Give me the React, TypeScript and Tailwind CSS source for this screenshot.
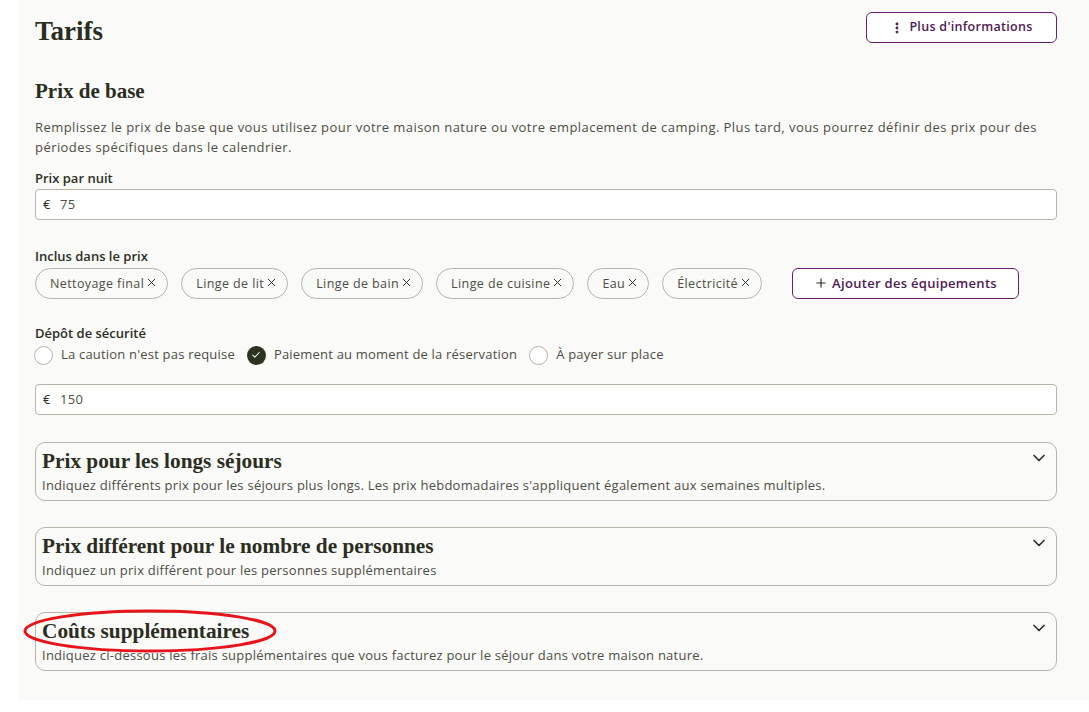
import React from "react";
import { ChevronDown, X, Plus, EllipsisVertical, Check } from "lucide-react";

const chips = [
  "Nettoyage final",
  "Linge de lit",
  "Linge de bain",
  "Linge de cuisine",
  "Eau",
  "Électricité",
];

const sections = [
  {
    title: "Prix pour les longs séjours",
    text: "Indiquez différents prix pour les séjours plus longs. Les prix hebdomadaires s'appliquent également aux semaines multiples.",
  },
  {
    title: "Prix différent pour le nombre de personnes",
    text: "Indiquez un prix différent pour les personnes supplémentaires",
  },
  {
    title: "Coûts supplémentaires",
    text: "Indiquez ci-dessous les frais supplémentaires que vous facturez pour le séjour dans votre maison nature.",
  },
];

const Radio = ({ label, checked }: { label: string; checked?: boolean }) => (
  <label className="flex items-center gap-2">
    {checked ? (
      <span className="w-[19px] h-[19px] rounded-full bg-[#2d3322] flex items-center justify-center">
        <Check size={10} strokeWidth={2.5} className="text-white" />
      </span>
    ) : (
      <span className="w-[19px] h-[19px] rounded-full border border-[#b9b4aa] bg-white" />
    )}
    <span>{label}</span>
  </label>
);

const App = () => {
  return (
    <div className="min-h-screen bg-white font-['Open_Sans',sans-serif] text-[13px] tracking-[0.44px] text-[#4d4d44]">
      <div className="relative ml-[18px] bg-[#fafaf8] pl-[17px] pr-[32px] pt-3 pb-[29px]">
        {/* header */}
        <div className="flex items-start justify-between">
          <h1 className="mt-[4px] font-['Liberation_Serif',serif] text-[27px] font-bold leading-[31px] tracking-normal text-[#2b2d1f]">
            Tarifs
          </h1>
          <button className="h-[31px] w-[191px] rounded-md border border-[#6a1f6c] bg-white flex items-center justify-center gap-[5px] text-[12.5px] font-semibold tracking-[0.3px] text-[#4e1a52]">
            <EllipsisVertical size={14} strokeWidth={3} />
            Plus d'informations
          </button>
        </div>

        {/* Prix de base */}
        <h2 className="mt-[30px] font-['Liberation_Serif',serif] text-[21px] font-bold leading-[28px] tracking-normal text-[#2b2d1f]">
          Prix de base
        </h2>
        <p className="mt-3 leading-5">
          Remplissez le prix de base que vous utilisez pour votre maison nature ou votre emplacement de camping. Plus tard, vous pourrez définir des prix pour des périodes spécifiques dans le calendrier.
        </p>

        <div className="mt-3 font-semibold leading-[18px] tracking-normal text-[#2b2d1f]">Prix par nuit</div>
        <div className="mt-[2px] h-[31px] rounded-sm border border-[#b9b4aa] bg-white flex items-center pl-[7px] gap-[9px]">
          <span className="text-[#2b2d1f]">€</span>
          <span>75</span>
        </div>

        <div className="mt-[27px] font-semibold leading-[18px] tracking-normal text-[#2b2d1f]">Inclus dans le prix</div>
        <div className="mt-[3px] flex items-center gap-[13px]">
          {chips.map((c) => (
            <span
              key={c}
              className="h-[31px] rounded-full border border-[#b9b4aa] flex items-center pl-[14px] pr-[9px] gap-[1px] pt-px text-[12.5px] tracking-[0.4px]"
            >
              {c}
              <X size={13} strokeWidth={1.8} className="text-[#2b2d1f] -translate-y-[2px]" />
            </span>
          ))}
          <button className="ml-[17px] h-[31px] w-[227px] rounded-md border border-[#6a1f6c] bg-white flex items-center justify-center gap-1 font-semibold tracking-[0.3px] text-[#4e1a52]">
            <Plus size={14} strokeWidth={2} className="text-[#2b2d1f] -translate-y-[1px]" />
            Ajouter des équipements
          </button>
        </div>

        <div className="mt-[25px] font-semibold leading-[18px] tracking-normal text-[#2b2d1f]">Dépôt de sécurité</div>
        <div className="mt-[3px] h-5 flex items-center gap-[12px] -ml-px tracking-[0.2px]">
          <Radio label="La caution n'est pas requise" />
          <Radio label="Paiement au moment de la réservation" checked />
          <Radio label="À payer sur place" />
        </div>

        <div className="mt-[19px] h-[31px] rounded-sm border border-[#b9b4aa] bg-white flex items-center pl-[7px] gap-[9px]">
          <span className="text-[#2b2d1f]">€</span>
          <span>150</span>
        </div>

        {/* accordions */}
        <div className="mt-[27px] flex flex-col gap-[26px]">
          {sections.map((s) => (
            <div
              key={s.title}
              className="h-[59px] rounded-[10px] border border-[#b9b4aa] pl-[6px] pr-[7px] pt-[6px] flex justify-between"
            >
              <div>
                <div className="font-['Liberation_Serif',serif] text-[21.3px] font-bold leading-[24px] tracking-normal text-[#2b2d1f]">
                  {s.title}
                </div>
                <div className="mt-[4px] leading-[16px] tracking-[0.25px]">{s.text}</div>
              </div>
              <ChevronDown size={20} strokeWidth={2} className="text-[#2b2d1f] -mt-[1px]" />
            </div>
          ))}
        </div>

        {/* annotation */}
        <svg
          className="absolute pointer-events-none"
          style={{ left: 4, top: 608 }}
          width={256}
          height={46}
          viewBox="0 0 256 46"
        >
          <ellipse cx={128} cy={23} rx={125} ry={20} fill="none" stroke="#e8141c" strokeWidth={3} />
        </svg>
      </div>
    </div>
  );
};

export default App;
